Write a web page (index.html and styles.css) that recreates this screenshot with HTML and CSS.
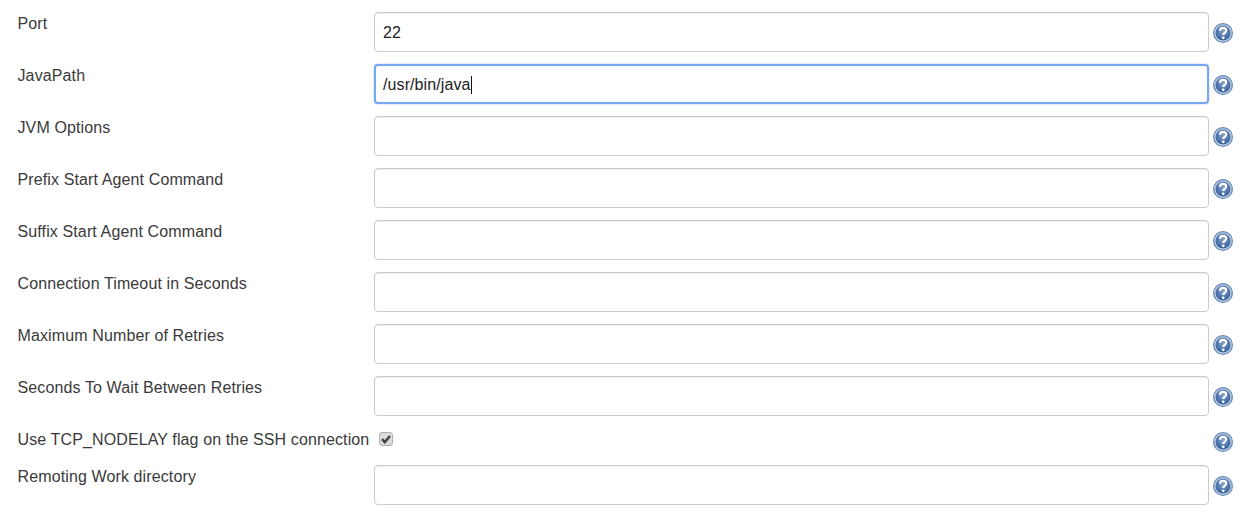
FILE: index.html
```html
<!DOCTYPE html>
<html lang="en">
<head>
<meta charset="UTF-8" />
<title>Agent configuration</title>
<link rel="stylesheet" href="styles.css">
</head>
<body>

<svg class="defs" width="0" height="0">
  <defs>
    <radialGradient id="helpFill" cx="50%" cy="40%" r="62%">
      <stop offset="0" stop-color="#86a5d0" />
      <stop offset="1" stop-color="#2f5a96" />
    </radialGradient>
    <symbol id="help" viewBox="0 0 20 20">
      <circle cx="10" cy="10" r="10" fill="#6688b5" />
      <circle cx="10" cy="10" r="8.7" fill="#c3d2e6" />
      <circle cx="10" cy="10" r="7.5" fill="url(#helpFill)" />
      <path d="M6.9 7.8c0-1.9 1.4-2.9 3.2-2.9s3.1 1 3.1 2.6c0 2.2-3 2.3-3 4.4" fill="none" stroke="#fff" stroke-width="2.2" />
      <circle cx="10.2" cy="14.8" r="1.4" fill="#fff" />
    </symbol>
  </defs>
</svg>

<form class="config">
  <div class="row">
    <label class="name">Port</label>
    <input class="field" type="text" value="22" />
    <svg class="help"><use href="#help" /></svg>
  </div>
  <div class="row">
    <label class="name">JavaPath</label>
    <div class="field focused"><span>/usr/bin/java</span><span class="caret"></span></div>
    <svg class="help"><use href="#help" /></svg>
  </div>
  <div class="row">
    <label class="name">JVM Options</label>
    <input class="field" type="text" />
    <svg class="help"><use href="#help" /></svg>
  </div>
  <div class="row">
    <label class="name">Prefix Start Agent Command</label>
    <input class="field" type="text" />
    <svg class="help"><use href="#help" /></svg>
  </div>
  <div class="row">
    <label class="name">Suffix Start Agent Command</label>
    <input class="field" type="text" />
    <svg class="help"><use href="#help" /></svg>
  </div>
  <div class="row">
    <label class="name">Connection Timeout in Seconds</label>
    <input class="field" type="text" />
    <svg class="help"><use href="#help" /></svg>
  </div>
  <div class="row">
    <label class="name">Maximum Number of Retries</label>
    <input class="field" type="text" />
    <svg class="help"><use href="#help" /></svg>
  </div>
  <div class="row">
    <label class="name">Seconds To Wait Between Retries</label>
    <input class="field" type="text" />
    <svg class="help"><use href="#help" /></svg>
  </div>
  <div class="row check-row">
    <label class="name">Use TCP_NODELAY flag on the SSH connection</label>
    <span class="check">
      <svg viewBox="0 0 14 14" width="14" height="14"><path d="M3 7.2l2.8 2.8L11 4" fill="none" stroke="#444" stroke-width="2.6" /></svg>
    </span>
    <svg class="help"><use href="#help" /></svg>
  </div>
  <div class="row">
    <label class="name">Remoting Work directory</label>
    <input class="field" type="text" />
    <svg class="help"><use href="#help" /></svg>
  </div>
</form>

</body>
</html>
```

FILE: styles.css
```css
html, body {
  margin: 0;
  background: #fff;
}
body {
  font-family: "Liberation Sans", Arial, sans-serif;
  font-size: 16px;
  color: #3a3a3a;
  overflow: hidden;
}
.defs {
  display: block;
}
.config {
  display: flex;
  flex-direction: column;
  gap: 12px;
  padding-top: 12px;
}
.row {
  display: grid;
  grid-template-columns: 374px 835px 24px;
  height: 40px;
}
.name {
  padding: 3px 0 0 17.5px;
  line-height: 18px;
  letter-spacing: 0.12px;
  white-space: nowrap;
}
.field {
  box-sizing: border-box;
  width: 835px;
  height: 40px;
  margin: 0;
  padding: 1px 8px 0;
  border: 1px solid #ccc;
  border-radius: 4px;
  background: #fff;
  font: 16px "Liberation Sans", Arial, sans-serif;
  letter-spacing: 0.1px;
  color: #222;
  box-shadow: inset 0 1px 1px rgba(0,0,0,0.075);
  outline: none;
}
.focused {
  display: flex;
  align-items: center;
  border: 2px solid #74a8f0;
  padding: 1px 7px 0;
  box-shadow: 0 0 2px rgba(102,163,240,0.6);
}
.caret {
  width: 1px;
  height: 18px;
  background: #111;
}
.help {
  width: 20px;
  height: 20px;
  margin: 11px 0 0 4px;
}
.check-row {
  height: 25px;
}
.check {
  display: block;
  box-sizing: border-box;
  width: 14px;
  height: 14px;
  margin: 4px 0 0 5px;
  border: 1px solid #b0b0b0;
  border-radius: 3px;
  background: #dcdcdc;
}
.check svg {
  display: block;
  margin: -1px;
}
.check-row .help {
  margin-top: 4px;
}
```
